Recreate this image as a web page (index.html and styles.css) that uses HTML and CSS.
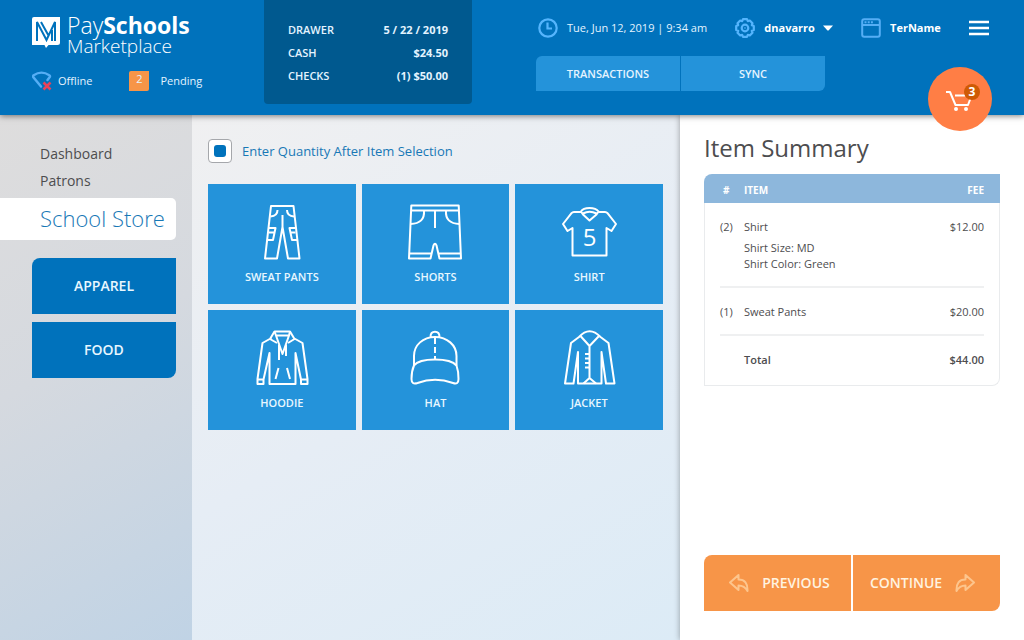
FILE: index.html
```html
<!DOCTYPE html>
<html lang="en">
<head>
<meta charset="utf-8">
<title>PaySchools Marketplace</title>
<meta name="viewport" content="width=device-width, initial-scale=1">
<link rel="stylesheet" href="styles.css">
</head>
<body>
<header class="topbar">
  <div class="brand">
    <a class="logo" href="#">
      <svg class="logo-mark" width="28" height="32" viewBox="0 0 28 32" aria-hidden="true">
        <path d="M2 0H28V25.500Q28 28 25.500 28H16.500L14 31 12.500 28H0V2Q0 0 2 0Z" fill="#fff"/>
        <path d="M5 24V5L14.500 23L23 5V24M9 5L16.500 18.500M20 24V13" fill="none" stroke="#0072bc" stroke-width="2"/>
      </svg>
      <span class="logo-text">
        <span class="logo-name">Pay<b>Schools</b></span>
        <span class="logo-sub">Marketplace</span>
      </span>
    </a>
    <div class="status">
      <span class="status-item offline">
        <svg width="20" height="20" viewBox="0 0 20 20" aria-hidden="true" fill="none">
          <path d="M9 15.500L1.200 6Q0.700 5 1.700 4.200Q9.500-1 17.300 4.200Q18.600 5 17.600 6.300L15.500 9" stroke="#55aef5" stroke-width="2.400" stroke-linecap="round"/>
          <path d="M11.500 11.500L18.500 18.500M18.500 11.500L11.500 18.500" stroke="#e8435a" stroke-width="2.600"/>
        </svg>
        Offline
      </span>
      <span class="status-item pending"><span class="count">2</span>Pending</span>
    </div>
  </div>

  <dl class="drawer">
    <div><dt>DRAWER</dt><dd>5 / 22 / 2019</dd></div>
    <div><dt>CASH</dt><dd>$24.50</dd></div>
    <div><dt>CHECKS</dt><dd>(1) $50.00</dd></div>
  </dl>

  <div class="tools">
    <div class="tools-row">
      <span class="tool clock">
        <svg width="20" height="20" viewBox="0 0 20 20" aria-hidden="true" fill="none" stroke="#55b5fd" stroke-width="2.200">
          <circle cx="10" cy="10" r="8.700"/><path d="M9.500 4.500V10.500H14"/>
        </svg>
        Tue, Jun 12, 2019 | 9:34 am
      </span>
      <button class="tool user" type="button">
        <svg width="20" height="20" viewBox="0 0 20 20" aria-hidden="true" fill="none" stroke="#55b5fd" stroke-width="2.200" stroke-linejoin="round">
          <path d="M8 1.200H12L12.800 3.200L14.800 2.500L17.500 5.200L16.800 7.200L18.800 8V12L16.800 12.800L17.500 14.800L14.800 17.500L12.800 16.800L12 18.800H8L7.200 16.800L5.200 17.500L2.500 14.800L3.200 12.800L1.200 12V8L3.200 7.200L2.500 5.200L5.200 2.500L7.200 3.200Z"/>
          <circle cx="10" cy="10" r="3.300"/><circle cx="10" cy="10" r=".4" stroke-width="1"/>
        </svg>
        dnavarro
        <svg class="caret" width="10" height="6" viewBox="0 0 10 6" aria-hidden="true"><path d="M0 .5H10L6 5Q5 6 4 5Z" fill="#fff"/></svg>
      </button>
      <span class="tool terminal">
        <svg width="20" height="20" viewBox="0 0 20 20" aria-hidden="true" fill="none" stroke="#55aef5" stroke-width="2">
          <rect x="1.200" y="1.200" width="17.600" height="17.600" rx="2"/><path d="M1 7H19"/><path d="M3.500 4.200H12" stroke-dasharray="2 1.200"/>
        </svg>
        TerName
      </span>
      <button class="menu" type="button" aria-label="Menu">
        <svg width="20" height="16" viewBox="0 0 20 16" aria-hidden="true" stroke="#fff" stroke-width="2.400"><path d="M0 2H20M0 8H20M0 14H20"/></svg>
      </button>
    </div>
    <div class="actions">
      <button type="button">TRANSACTIONS</button>
      <button type="button">SYNC</button>
    </div>
  </div>

  <button class="cart" type="button" aria-label="Cart, 3 items">
    <svg width="26" height="22" viewBox="0 0 26 22" aria-hidden="true" fill="none" stroke="#fff" stroke-width="2" stroke-linejoin="round">
      <path d="M0 2H4L9.500 15H22L25 7M9 5.500H19"/><circle cx="10" cy="19" r="1" /><circle cx="20" cy="19" r="1"/>
    </svg>
    <span class="badge">3</span>
  </button>
</header>

<div class="layout">
  <aside class="sidebar">
    <nav class="nav">
      <a href="#">Dashboard</a>
      <a href="#">Patrons</a>
      <a class="current" href="#" aria-current="page">School Store</a>
    </nav>
    <div class="categories">
      <button type="button">APPAREL</button>
      <button type="button">FOOD</button>
    </div>
  </aside>

  <main class="store">
    <label class="quantity"><input type="checkbox" checked>Enter Quantity After Item Selection</label>
    <div class="tiles">
      <button class="tile" type="button">
        <svg class="art" viewBox="0 0 60 60" aria-hidden="true">
          <path d="M19 3H41.500L47.500 55.500H36L30.500 24L25 55.500H13ZM30.500 12V28"/>
          <path d="M25.500 7Q25.500 13 18.500 13.500M35 7Q35 13 42 13.500"/>
          <path d="M17 25H23.500L21 37H15.500M17 29.500H22M43.500 25H37.500L40 37H45M43.500 29.500H39"/>
        </svg>
        SWEAT PANTS
      </button>
      <button class="tile" type="button">
        <svg class="art" viewBox="0 0 60 60" aria-hidden="true">
          <path d="M6.300 2.500H53.700L56 55.500H34.500L31.500 42.500Q30 39 28.500 42.500L25.500 55.500H4ZM6 7.500H54M4.500 50.500H26.500M33.500 50.500H55.500M30 7.500V25"/>
          <path d="M19 7.500Q20 20.500 5.500 21M41 7.500Q40 20.500 54.500 21"/>
        </svg>
        SHORTS
      </button>
      <button class="tile" type="button">
        <svg class="art" viewBox="0 0 60 60" aria-hidden="true">
          <path d="M22 9H15Q13.500 9 12.500 10.200L4 21L8.500 28L13.500 25V52.500H47.500V25L52.500 28L57 21L48.500 10.200Q47.500 9 46 9H39.500"/>
          <path d="M22 8.500Q24 5 30.500 5T39.500 8.500L37.500 11.500L30.500 17.500L24 11.500ZM24 10.500Q30.500 7 37.500 10.500"/>
          <text class="art-number" x="30.500" y="43" text-anchor="middle">5</text>
        </svg>
        SHIRT
      </button>
      <button class="tile" type="button">
        <svg class="art" viewBox="0 0 60 60" aria-hidden="true">
          <path d="M18 10L22.500 2.500H38L42.500 10L36 14M18 10L25 14M19.500 9L10.500 14L5.500 50V55H11.500V50.500H5.500M11.500 50.500L17.500 24V55H43.500V24L49 50.500V55H55.500V50L50.500 14L41.500 9M49 50.500H55.500"/>
          <path d="M24 6.500H37L30.500 25ZM27 16V31M34 16V27M26.500 39L23.500 50M35 39L38 50M22.500 2.500L24 6.500M38 2.500L37 6.500"/>
        </svg>
        HOODIE
      </button>
      <button class="tile" type="button">
        <svg class="art" viewBox="0 0 60 60" aria-hidden="true">
          <path d="M9 36.500V27C9 16 18 8 30 8S51.500 16 51.500 27V36.500M25.500 8Q25.500 2.800 30 2.800T34.500 8"/>
          <path d="M9 36.500C15 28.500 45 28.500 51.500 36.500Q53.500 42 53.500 50Q53.500 56 48 54Q30 47.500 12.500 54Q6.500 56 6.500 50Q6.500 42 9 36.500Z"/>
          <path d="M30 9V30" stroke-dasharray="6 3"/>
        </svg>
        HAT
      </button>
      <button class="tile" type="button">
        <svg class="art" viewBox="0 0 60 60" aria-hidden="true">
          <path d="M20 8Q30.500-3.500 41.500 8L49.500 14L55.500 54.500H47L42.500 23V54.500H19V23L14.500 54.500H6L12 14Z"/>
          <path d="M21.500 7L30.500 17L40 7M30.500 17V49L24.500 54.500M30.500 49L37 54.500M26 25H29.500M26 29.500H29.500M26 34H29.500M26 38.500H29.500"/>
        </svg>
        JACKET
      </button>
    </div>
  </main>

  <section class="summary">
    <h1>Item Summary</h1>
    <table class="items">
      <thead>
        <tr><th scope="col">#</th><th scope="col">ITEM</th><th scope="col">FEE</th></tr>
      </thead>
      <tbody>
        <tr><td>(2)</td><td>Shirt<ul class="options"><li>Shirt Size: MD</li><li>Shirt Color: Green</li></ul></td><td>$12.00</td></tr>
        <tr><td>(1)</td><td>Sweat Pants</td><td>$20.00</td></tr>
      </tbody>
      <tfoot>
        <tr><td></td><td>Total</td><td>$44.00</td></tr>
      </tfoot>
    </table>
    <div class="steps">
      <button type="button">
        <svg width="20" height="20" viewBox="0 0 20 20" aria-hidden="true"><path d="M1 9.500L9.500 2V6.500Q19 6.500 18.500 18Q15.500 12.500 9.500 12.500V17Z"/></svg>
        PREVIOUS
      </button>
      <button type="button">
        CONTINUE
        <svg width="20" height="20" viewBox="0 0 20 20" aria-hidden="true"><path d="M19 9.500L10.500 2V6.500Q1 6.500 1.500 18Q4.500 12.500 10.500 12.500V17Z"/></svg>
      </button>
    </div>
  </section>
</div>
</body>
</html>
```
FILE: styles.css
```css
* { box-sizing: border-box; }

body {
  margin: 0;
  min-height: 100vh;
  display: flex;
  flex-direction: column;
  font: 11px/16px "Open Sans", "Noto Sans", sans-serif;
  color: #4d4d4f;
}

button {
  font: inherit;
  color: inherit;
  border: 0;
  padding: 0;
  background: none;
  cursor: pointer;
}

a { color: inherit; text-decoration: none; }
svg { display: block; flex: none; }

/* Header */
.topbar {
  position: relative;
  z-index: 2;
  display: flex;
  align-items: flex-start;
  min-height: 115px;
  background: #0072bc;
  color: #e4f4ff;
  box-shadow: 0 1px 6px rgba(0, 0, 0, .5);
}

.brand { width: 264px; padding: 13px 0 0 32px; }
.logo { display: flex; gap: 7px; color: #fff; }
.logo-mark { margin-top: 4px; }
.logo-text { display: flex; flex-direction: column; }
.logo-name { font-size: 23px; line-height: 24px; font-weight: 300; }
.logo-name b { font-weight: 700; }
.logo-sub { font-size: 19px; line-height: 18px; font-weight: 300; }

.status { display: flex; gap: 37px; margin-top: 16px; }
.status-item { display: flex; align-items: center; }
.offline { gap: 6px; }
.pending { gap: 11px; }
.count {
  width: 20px;
  height: 20px;
  border-radius: 2px 0;
  background: #f79548;
  text-align: center;
}

.drawer {
  width: 208px;
  margin: 0;
  padding: 18px 24px 17px;
  border-radius: 0 0 4px 4px;
  background: #00598f;
  font-weight: 600;
  line-height: 23px;
}
.drawer div { display: flex; justify-content: space-between; }
.drawer dd { margin: 0; font-weight: 700; }

.tools { flex: 1; padding: 16px 35px 0 64px; }
.tools-row { display: flex; align-items: center; justify-content: space-between; height: 24px; padding-left: 2px; }
.tool { display: flex; align-items: center; gap: 9px; }
.user, .terminal { color: #fff; font-weight: 700; }
.caret { margin-left: -1px; }

.actions { display: flex; gap: 1px; margin-top: 16px; max-width: 289px; }
.actions button {
  flex: 1;
  height: 35px;
  background: #2493da;
  font-weight: 600;
}
.actions button:first-child { border-top-left-radius: 6px; }
.actions button:last-child { border-bottom-right-radius: 6px; }

.cart {
  position: absolute;
  right: 32px;
  bottom: -16px;
  width: 64px;
  height: 64px;
  padding: 4px 0 0 18px;
  border-radius: 50%;
  background: #ff7e45;
}
.badge {
  position: absolute;
  top: 17px;
  right: 12px;
  width: 16px;
  height: 16px;
  border-radius: 50%;
  background: #cf5a05;
  color: #fff;
  font-size: 12px;
  font-weight: 700;
}

/* Page columns */
.layout {
  flex: 1;
  display: grid;
  grid-template-columns: 192px 1fr 344px;
}

.sidebar {
  padding: 25px 16px 24px 0;
  background: linear-gradient(150deg, #dedddd, #d5d9df 45%, #c0d3e5);
}
.nav { display: flex; flex-direction: column; font-size: 14px; line-height: 27px; }
.nav a { padding-left: 40px; }
.nav .current {
  margin-top: 4px;
  padding-bottom: 2px;
  border-radius: 0 5px 5px 0;
  background: #fff;
  color: #1878b6;
  font-size: 22px;
  font-weight: 300;
  line-height: 40px;
  white-space: nowrap;
}
.categories { display: grid; gap: 8px; margin: 18px 0 0 32px; }
.categories button {
  height: 56px;
  background: #0072bc;
  color: #e8f7ff;
  font-size: 14px;
  font-weight: 600;
}
.categories button:first-child { border-top-left-radius: 8px; }
.categories button:last-child { border-bottom-right-radius: 8px; }

.store {
  padding: 24px 17px 24px 16px;
  background: linear-gradient(150deg, #f0f0f1, #e6edf5 50%, #dcebf6);
}
.quantity { display: flex; align-items: center; gap: 10px; width: fit-content; color: #1878b6; font-size: 13px; }
.quantity input {
  appearance: none;
  width: 24px;
  height: 24px;
  margin: 0;
  border: 1px solid #a5a7ab;
  border-radius: 4px;
  background: #fff;
}
.quantity input:checked::before {
  content: "";
  display: block;
  width: 12px;
  height: 12px;
  margin: 5px;
  border-radius: 3px;
  background: #0072bc;
}

.tiles { display: grid; grid-template-columns: repeat(3, 1fr); gap: 6px; margin-top: 21px; }
.tile {
  display: flex;
  flex-direction: column;
  align-items: center;
  gap: 6px;
  min-height: 120px;
  padding-top: 19px;
  background: #2493da;
  color: #e8f7ff;
  font-weight: 600;
}
.art { width: 60px; height: 60px; fill: none; stroke: #fff; stroke-width: 2; stroke-linejoin: round; }
.art-number { fill: #fff; stroke: none; font-size: 24px; font-weight: 400; }

/* Summary */
.summary {
  display: flex;
  flex-direction: column;
  padding: 17px 24px 29px;
  background: #fff;
  box-shadow: 0 0 6px rgba(0, 0, 0, .35);
}
.summary h1 { margin: 0 0 10px; font-size: 24px; line-height: 32px; font-weight: 400; }

.items { width: 100%; border-spacing: 0; }
.items th {
  height: 29px;
  padding: 3px 0 0;
  background: #8db7dc;
  color: #fff;
  font-size: 10px;
  text-align: left;
}
.items th:first-child { padding-left: 19px; border-top-left-radius: 8px; }
.items td {
  padding: 16px 0;
  vertical-align: top;
  border: 0 solid #e9ebed;
  background: linear-gradient(#eff0f1, #eff0f1) no-repeat right bottom / 100% 2px;
}
.items td:first-child { width: 40px; padding-left: 15px; border-left-width: 1px; background-size: 24px 2px; }
.items th:last-child { padding-right: 16px; text-align: right; }
.items td:last-child { padding-right: 15px; border-right-width: 1px; text-align: right; background-position: left bottom; background-size: calc(100% - 15px) 2px; }
.items tfoot td { padding-bottom: 17px; border-bottom-width: 1px; background: none; font-weight: 600; }
.items tfoot td:last-child { border-bottom-right-radius: 8px; }
.options { margin: 5px 0 0; padding: 0; list-style: none; }

.steps { display: grid; grid-template-columns: 1fr 1fr; gap: 2px; margin-top: auto; }
.steps button {
  display: flex;
  align-items: center;
  justify-content: center;
  gap: 13px;
  height: 56px;
  background: #f79548;
  color: #fff3e0;
  font-size: 14px;
  font-weight: 600;
}
.steps button:first-child { padding-left: 4px; border-top-left-radius: 8px; }
.steps button:last-child { padding-right: 8px; border-bottom-right-radius: 8px; }
.steps svg { fill: none; stroke: #fdc58d; stroke-width: 2; stroke-linejoin: round; }
```
